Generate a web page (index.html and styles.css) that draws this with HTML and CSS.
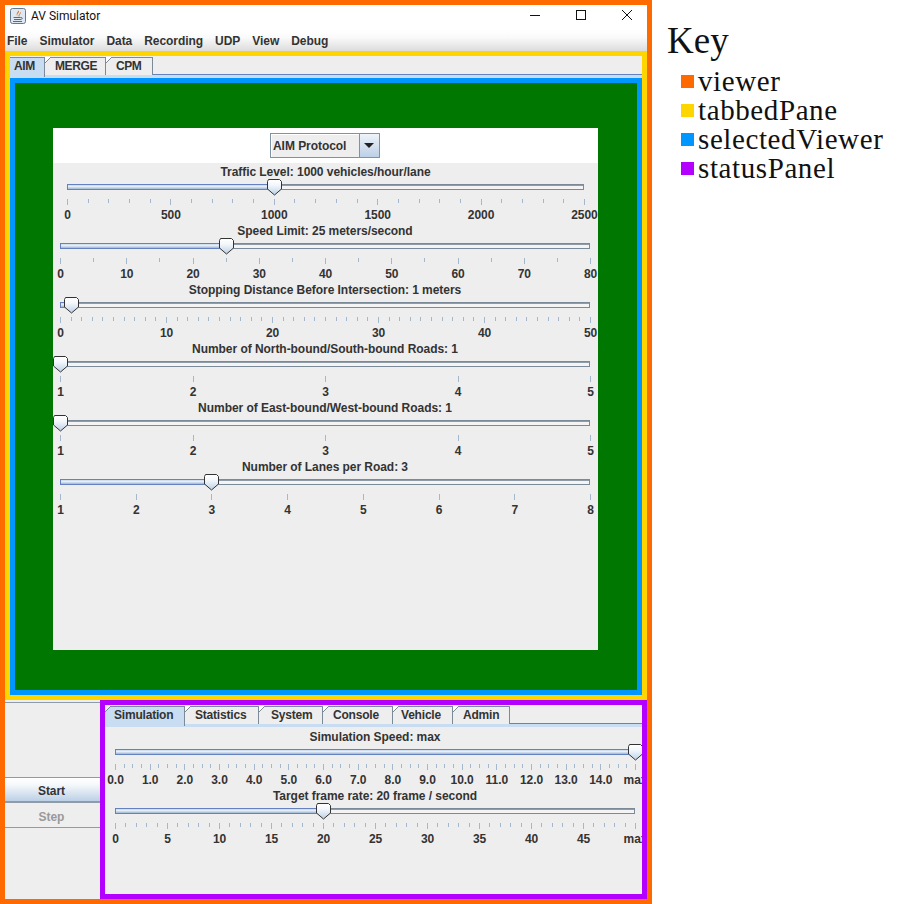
FILE: index.html
```html
<!DOCTYPE html>
<html lang="en">
<head>
  <meta charset="UTF-8" />
  <title>AV Simulator</title>
  <link rel="stylesheet" href="styles.css">
</head>
<body>
<svg class="defs" width="0" height="0">
  <linearGradient id="thumbFill" x1="0" y1="0" x2="0" y2="1">
    <stop offset="0" stop-color="#ffffff"/>
    <stop offset="0.35" stop-color="#f4f8fc"/>
    <stop offset="1" stop-color="#bcd0e6"/>
  </linearGradient>
</svg>

<div class="page">
  <div class="viewer">
    <div class="titlebar">
      <svg class="app-icon" width="16" height="16" viewBox="0 0 16 16">
        <rect x="0.5" y="0.5" width="15" height="15" rx="2" fill="#dfe8f1" stroke="#66788c"/>
        <path d="M8.5 2.5C10.5 4.5 6 5.5 7.5 8.5C6 7 6.5 5.5 8.5 2.5Z" fill="#e0701c"/>
        <path d="M10.5 4.5C10.5 6 8.5 6.5 9 8.5" fill="none" stroke="#e0701c"/>
        <path d="M3.5 9.5H10.5M4 11.5H10M3 13.5H12" fill="none" stroke="#4d6f96"/>
        <path d="M10.5 9.5C13 9 13 11.5 10 11.5" fill="none" stroke="#4d6f96"/>
      </svg>
      <span class="app-title">AV Simulator</span>
      <div class="window-buttons">
        <svg width="12" height="12" viewBox="0 0 12 12"><path d="M1 6.5H11" stroke="#111"/></svg>
        <svg width="12" height="12" viewBox="0 0 12 12"><rect x="1.5" y="1.5" width="9" height="9" fill="none" stroke="#111"/></svg>
        <svg width="12" height="12" viewBox="0 0 12 12"><path d="M1 1L11 11M11 1L1 11" stroke="#111"/></svg>
      </div>
    </div>
    <div class="menubar">
      <span>File</span><span>Simulator</span><span>Data</span><span>Recording</span><span>UDP</span><span>View</span><span>Debug</span>
    </div>

    <div class="tabbed-pane">
      <div class="tabs top-tabs">
        <div class="tab first selected">AIM</div>
        <div class="tab">MERGE</div>
        <div class="tab">CPM</div>
      </div>
      <div class="selected-viewer">
        <div class="setup-panel">
          <div class="combo-row">
            <div class="combo">
              <span class="combo-value">AIM Protocol</span>
              <span class="combo-arrow"></span>
            </div>
          </div>
          <div class="sliders" id="setupSliders"></div>
        </div>
      </div>
    </div>

    <div class="bottom">
      <div class="controls">
        <div class="btn start">Start</div>
        <div class="btn step">Step</div>
      </div>
      <div class="status-panel">
        <div class="tabs status-tabs">
          <div class="tab selected">Simulation</div>
          <div class="tab">Statistics</div>
          <div class="tab">System</div>
          <div class="tab">Console</div>
          <div class="tab">Vehicle</div>
          <div class="tab">Admin</div>
        </div>
        <div class="sliders" id="statusSliders"></div>
      </div>
    </div>
  </div>

  <div class="key">
    <h1>Key</h1>
    <ul>
      <li><i class="swatch orange"></i>viewer</li>
      <li><i class="swatch yellow"></i>tabbedPane</li>
      <li><i class="swatch blue"></i>selectedViewer</li>
      <li><i class="swatch purple"></i>statusPanel</li>
    </ul>
  </div>
</div>

<script src="script.js"></script>
</body>
</html>
```

FILE: styles.css
```css
* {
  box-sizing: border-box;
}

body {
  margin: 0;
  background: #fff;
  font-family: "Liberation Sans", Arial, sans-serif;
  font-size: 12px;
  font-weight: bold;
  letter-spacing: -0.05px;
  color: #333;
}

.defs {
  position: absolute;
}

.page {
  display: flex;
  width: 900px;
  height: 904px;
  overflow: hidden;
}

.viewer {
  display: flex;
  flex-direction: column;
  flex: none;
  width: 652px;
  height: 904px;
  border: 5px solid #ff6a00;
}

/* title + menu */
.titlebar {
  display: flex;
  align-items: center;
  flex: none;
  height: 25px;
  padding: 0 14px 4px 5px;
  background: #fff;
}

.app-title {
  margin-left: 5px;
  font-family: Roboto, sans-serif;
  font-weight: normal;
  font-size: 12px;
  letter-spacing: 0;
  color: #111;
}

.window-buttons {
  display: flex;
  gap: 34px;
  margin-left: auto;
  margin-bottom: 1px;
}

.menubar {
  display: flex;
  align-items: center;
  flex: none;
  height: 21px;
  padding: 0 0 0 2px;
  background: linear-gradient(#fff, #fafafa 35%, #dcdcdc);
}

.menubar span {
  margin-right: 12px;
}

/* tabs */
.tabbed-pane {
  display: flex;
  flex-direction: column;
  flex: none;
  height: 649px;
  border: 5px solid #ffd500;
}

.tabs {
  display: flex;
  flex: none;
  height: 22px;
  padding-top: 1px;
  background: #eee;
  border-bottom: 3px solid #c8ddf2;
  position: relative;
}

.tabs::after {
  content: "";
  position: absolute;
  left: 0;
  right: 0;
  bottom: 0;
  height: 1px;
  background: #6382bf;
}

.tab {
  position: relative;
  z-index: 1;
  flex: none;
  height: 18px;
  padding: 0 0 0 10px;
  line-height: 16px;
  letter-spacing: -0.2px;
  background: #eee;
  border-top: 1px solid #7a8a99;
  border-right: 1px solid #7a8a99;
}

.tab::before {
  content: "";
  position: absolute;
  left: 0;
  top: -1px;
  width: 6px;
  height: 6px;
  background: linear-gradient(135deg, #fff 44%, #7a8a99 44%, #7a8a99 56%, transparent 56%);
}

.tab.first {
  padding-left: 4px;
}

.tab.selected {
  height: 20px;
  background: #c8ddf2;
  z-index: 2;
}

.tab.selected::before {
  background: linear-gradient(135deg, #eee 44%, #7a8a99 44%, #7a8a99 56%, transparent 56%);
}

.tab.first::before {
  display: none;
}

.top-tabs .tab { letter-spacing: -0.4px; }
.top-tabs .tab:nth-child(1) { width: 35px; }
.top-tabs .tab:nth-child(2) { width: 61px; }
.top-tabs .tab:nth-child(3) { width: 47px; }

.status-tabs .tab:nth-child(1) { width: 80px; padding-left: 9px; }
.status-tabs .tab:nth-child(2) { width: 74px; }
.status-tabs .tab:nth-child(3) { width: 64px; padding-left: 12px; }
.status-tabs .tab:nth-child(4) { width: 70px; }
.status-tabs .tab:nth-child(5) { width: 60px; padding-left: 8px; }
.status-tabs .tab:nth-child(6) { width: 57px; }

.selected-viewer {
  flex: 1;
  min-height: 0;
  padding: 45px 39px 40px 38px;
  background: #007700;
  border: 5px solid #0096ff;
}

.setup-panel {
  height: 100%;
  background: #eee;
}

.combo-row {
  display: flex;
  justify-content: center;
  height: 35px;
  padding: 5px 1px 0 0;
  background: #fff;
}

.combo {
  display: flex;
  width: 110px;
  height: 25px;
  border: 1px solid #7f93a8;
  background: #eee;
  box-shadow: inset 1px 1px 0 #fff;
}

.combo-value {
  flex: 1;
  padding-left: 2px;
  line-height: 24px;
  border-right: 1px solid #7f93a8;
}

.combo-arrow {
  position: relative;
  flex: none;
  width: 19px;
  background: linear-gradient(#eef3f9, #bcd0e6);
}

.combo-arrow::after {
  content: "";
  position: absolute;
  left: 4px;
  top: 9px;
  border-left: 5px solid transparent;
  border-right: 5px solid transparent;
  border-top: 5px solid #222;
}

/* sliders */
.slider {
  position: relative;
  height: 59px;
  margin-left: 7px;
  width: 530px;
}

.slider.inset {
  margin-left: 14px;
  width: 517px;
}

.status-panel .sliders {
  padding-top: 1px;
}

.status-panel .slider {
  margin-left: 10px;
  width: 520px;
}

.slider-title {
  position: absolute;
  left: 0;
  right: 0;
  top: 2px;
  line-height: 14px;
  text-align: center;
  white-space: nowrap;
}

.track {
  position: absolute;
  left: 0;
  right: 0;
  top: 21px;
  height: 6px;
  border: 1px solid #7a8a99;
  background: linear-gradient(#8f9ba6 1px, #f4f4f4 1px);
}

.fill {
  position: absolute;
  left: -1px;
  top: -1px;
  height: 6px;
  border: 1px solid #6382bf;
  background: linear-gradient(#c8d8ea, #e8eff7 40%, #9db5d3);
}

.thumb {
  position: absolute;
  top: 16px;
  display: block;
  margin-left: -7px;
}

.tick {
  position: absolute;
  top: 36px;
  width: 1px;
  height: 4px;
  background: #a3b8cc;
}

.tick.major {
  height: 6px;
}

.tick-label {
  position: absolute;
  top: 45px;
  margin-left: 0.5px;
  line-height: 14px;
  transform: translateX(-50%);
  white-space: nowrap;
}

/* bottom strip */
.bottom {
  display: flex;
  flex: none;
  height: 199px;
  background: #eee;
}

.controls {
  flex: none;
  width: 95px;
  padding-top: 2px;
  background: linear-gradient(#8f9ba6, #8f9ba6) 0 2px / 100% 1px no-repeat #eee;
}

.btn {
  height: 25px;
  padding-right: 2px;
  text-align: center;
  line-height: 29px;
}

.btn.start {
  height: 26px;
  margin-top: 75px;
  border-top: 1px solid #8f9ba6;
  border-bottom: 2px solid #8f9ba6;
  line-height: 27px;
  background: linear-gradient(#fff, #f5f8fb 30%, #bcd0e6);
}

.btn.step {
  color: #999;
  border-bottom: 1px solid #8f9ba6;
}

.status-panel {
  flex: 1;
  min-width: 0;
  overflow: hidden;
  border: 5px solid #b400ff;
  background: #eee;
}

/* key */
.key {
  flex: 1;
  padding: 19px 0 0 15px;
  font-family: "Liberation Serif", serif;
  font-weight: normal;
  letter-spacing: 0;
  color: #111;
}

.key h1 {
  margin: 0;
  font-size: 37px;
  line-height: 44px;
  font-weight: normal;
}

.key ul {
  margin: 4px 0 0;
  padding: 0 0 0 14px;
  list-style: none;
}

.key li {
  display: flex;
  align-items: center;
  height: 29px;
  font-size: 29px;
  letter-spacing: 0.6px;
}

.swatch {
  flex: none;
  width: 13px;
  height: 13px;
  margin-right: 4px;
}

.orange { background: #ff6a00; }
.yellow { background: #ffd500; }
.blue { background: #0096ff; }
.purple { background: #b400ff; }
```

FILE: script.js
```js
const THUMB = '<svg class="thumb" width="15" height="17" viewBox="0 0 15 17">' +
  '<path d="M1.5 .5H12.5L14.5 2.5V10L7.5 16L.5 10V2.5Z" fill="url(#thumbFill)" stroke="#333"/></svg>';

function labelsFrom(min, step, count, fmt) {
  const out = [];
  for (let i = 0; i < count; i++) out.push(fmt ? fmt(min + step * i) : String(min + step * i));
  return out;
}

// ticks = number of minor divisions between two labels
const setup = [
  { title: 'Traffic Level: 1000 vehicles/hour/lane', inset: true, pos: 0.4, ticks: 5, labels: labelsFrom(0, 500, 6) },
  { title: 'Speed Limit: 25 meters/second', pos: 25 / 80, ticks: 2, labels: labelsFrom(0, 10, 9) },
  { title: 'Stopping Distance Before Intersection: 1 meters', pos: 1 / 50, ticks: 10, labels: labelsFrom(0, 10, 6) },
  { title: 'Number of North-bound/South-bound Roads: 1', pos: 0, ticks: 1, labels: labelsFrom(1, 1, 5) },
  { title: 'Number of East-bound/West-bound Roads: 1', pos: 0, ticks: 1, labels: labelsFrom(1, 1, 5) },
  { title: 'Number of Lanes per Road: 3', pos: 2 / 7, ticks: 1, labels: labelsFrom(1, 1, 8) }
];

const status = [
  { title: 'Simulation Speed: max', pos: 1, ticks: 4, labels: labelsFrom(0, 1, 15, n => n.toFixed(1)).concat('max') },
  { title: 'Target frame rate: 20 frame / second', pos: 0.4, ticks: 5, labels: labelsFrom(0, 5, 10).concat('max') }
];

function renderSlider(s) {
  const pct = s.pos * 100;
  let html = `<div class="slider-title">${s.title}</div>`;
  html += `<div class="track"><div class="fill" style="width:${pct}%"></div></div>`;
  html += THUMB.replace('class="thumb"', `class="thumb" style="left:${pct}%"`);

  const spans = s.labels.length - 1;
  const total = spans * s.ticks;
  for (let i = 0; i <= total; i++) {
    const major = i % s.ticks === 0 ? ' major' : '';
    html += `<i class="tick${major}" style="left:${i / total * 100}%"></i>`;
  }
  s.labels.forEach((text, i) => {
    html += `<span class="tick-label" style="left:${i / spans * 100}%">${text}</span>`;
  });

  const el = document.createElement('div');
  el.className = s.inset ? 'slider inset' : 'slider';
  el.innerHTML = html;
  return el;
}

const setupBox = document.getElementById('setupSliders');
setup.forEach(s => setupBox.appendChild(renderSlider(s)));

const statusBox = document.getElementById('statusSliders');
status.forEach(s => statusBox.appendChild(renderSlider(s)));
```
